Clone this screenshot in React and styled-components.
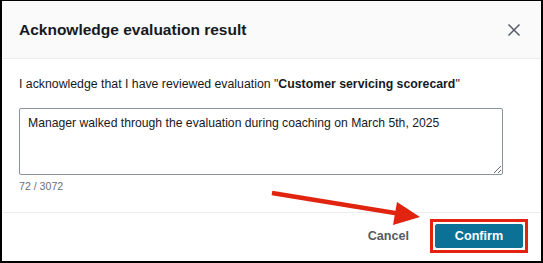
import React from 'react';
import styled, { createGlobalStyle } from 'styled-components';

const GlobalStyle = createGlobalStyle`
  * { box-sizing: border-box; }
  body {
    margin: 0;
    font-family: "Liberation Sans", Arial, sans-serif;
    background: #ffffff;
  }
`;

const Frame = styled.div`
  position: relative;
  width: 543px;
  height: 263px;
  border: 2px solid #000;
  border-top-width: 1px;
  display: flex;
  flex-direction: column;
  background: #fff;
  overflow: hidden;
`;

const Header = styled.div`
  height: 58px;
  flex: none;
  background: #fafafa;
  border-bottom: 1px solid #ececec;
  display: flex;
  align-items: center;
  justify-content: space-between;
  padding: 0 17px 0 17px;
`;

const Title = styled.h2`
  margin: 0;
  font-size: 15.5px;
  font-weight: 700;
  color: #16191f;
`;

const CloseButton = styled.button`
  border: none;
  background: none;
  padding: 0;
  width: 20px;
  height: 20px;
  display: flex;
  align-items: center;
  justify-content: center;
  color: #545b64;
`;

const Body = styled.div`
  flex: 1;
  padding: 17px 38px 0 17px;
`;

const Statement = styled.p`
  margin: 0;
  font-size: 12.3px;
  line-height: 16px;
  color: #16191f;

  strong {
    font-weight: 700;
  }
`;

const Note = styled.textarea`
  display: block;
  width: 100%;
  height: 67px;
  margin-top: 16px;
  border: 1px solid #879596;
  border-radius: 2px;
  padding: 6px 8px;
  font-family: "Liberation Sans", Arial, sans-serif;
  font-size: 12.2px;
  line-height: 16px;
  color: #16191f;
  resize: vertical;
`;

const Counter = styled.div`
  margin-top: 4px;
  font-size: 10.6px;
  line-height: 14px;
  color: #687078;
`;

const Footer = styled.div`
  height: 49px;
  flex: none;
  border-top: 1px solid #eaeded;
  display: flex;
  align-items: center;
  justify-content: flex-end;
  gap: 17px;
  padding: 0 13px 2px 0;
`;

const Highlight = styled.span`
  display: flex;
  border: 3px solid #e3230f;
  padding: 2px;
`;

const Button = styled.button`
  font-family: "Liberation Sans", Arial, sans-serif;
  font-size: 12.6px;
  font-weight: 700;
  height: 24px;
  border-radius: 2px;
  cursor: pointer;
  border: ${p => (p.$primary ? '1px solid #0b6f96' : 'none')};
  background: ${p => (p.$primary ? '#0b7197' : 'transparent')};
  color: ${p => (p.$primary ? '#ffffff' : '#545b64')};
  width: ${p => (p.$primary ? '88px' : 'auto')};
  padding: 0 4px;
`;

const Annotation = styled.svg`
  position: absolute;
  left: -2px;
  top: -1px;
  width: 543px;
  height: 263px;
  pointer-events: none;
`;

export default function App() {
  return (
    <>
      <GlobalStyle />
      <Frame>
        <Header>
          <Title>Acknowledge evaluation result</Title>
          <CloseButton aria-label="Close">
            <svg width="14" height="14" viewBox="0 0 14 14">
              <path d="M1.5 1.5 L12.5 12.5 M12.5 1.5 L1.5 12.5" stroke="#545b64" strokeWidth="1.5" fill="none" />
            </svg>
          </CloseButton>
        </Header>
        <Body>
          <Statement>
            I acknowledge that I have reviewed evaluation "<strong>Customer servicing scorecard</strong>"
          </Statement>
          <Note defaultValue="Manager walked through the evaluation during coaching on March 5th, 2025" />
          <Counter>72 / 3072</Counter>
        </Body>
        <Footer>
          <Button>Cancel</Button>
          <Highlight>
            <Button $primary>Confirm</Button>
          </Highlight>
        </Footer>
        <Annotation viewBox="0 0 543 263">
          <line x1="272" y1="193" x2="398" y2="213.5" stroke="#e0240f" strokeWidth="4.5" />
          <polygon points="397,202 420,217 393,225" fill="#e0240f" />
        </Annotation>
      </Frame>
    </>
  );
}
